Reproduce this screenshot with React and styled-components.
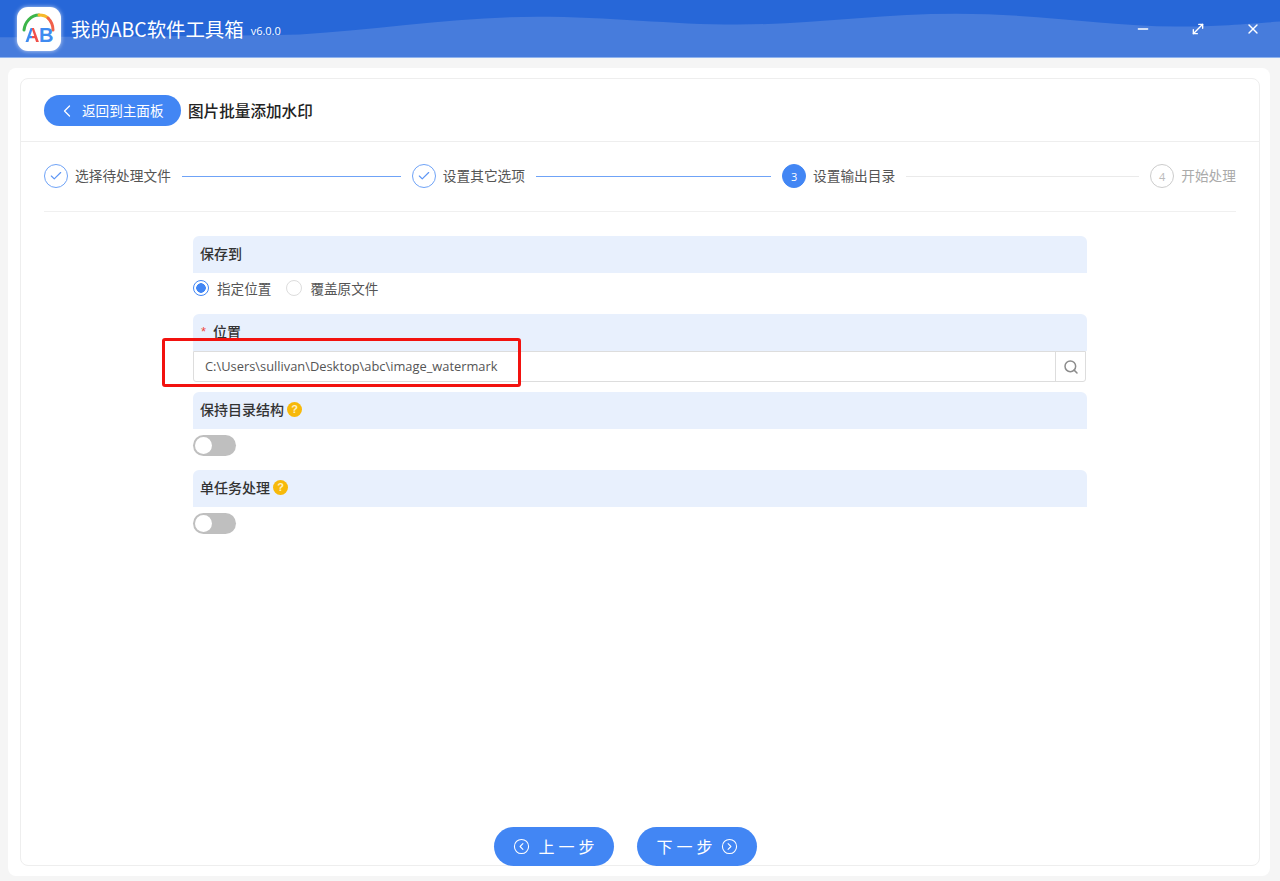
import { Fragment } from "react";
import styled, { createGlobalStyle } from "styled-components";
import { Check, ChevronLeft, CircleChevronLeft, CircleChevronRight, Minus, MoveDiagonal, Search, X } from "lucide-react";

const GlobalStyle = createGlobalStyle`
  html, body {
    margin: 0;
    padding: 0;
    background: #f5f5f5;
  }
  body {
    font-family: "Noto Sans CJK SC", "Open Sans", sans-serif;
    color: #333;
  }
  * {
    box-sizing: border-box;
  }
`;

const Page = styled.div`
  display: flex;
  flex-direction: column;
  width: 1280px;
  height: 881px;
  overflow: hidden;
  background: #f5f5f5;
`;

const Header = styled.header`
  position: relative;
  display: flex;
  align-items: center;
  flex: none;
  height: 58px;
  padding: 0 19px 0 17px;
  background: #2767d8;
  border-bottom: 1px solid #8fb3ee;
  color: #fff;
`;

const Wave = styled.svg`
  position: absolute;
  inset: 0;
  width: 100%;
  height: 100%;
`;

const Logo = styled.div`
  position: relative;
  display: flex;
  align-items: center;
  justify-content: center;
  flex: none;
  width: 44px;
  height: 44px;
  margin-top: 1px;
  border-radius: 11px;
  background: #fff;
  box-shadow: 0 0 4px rgba(255, 255, 255, 0.7);
`;

const LogoArc = styled.svg`
  position: absolute;
  left: 4px;
  top: 5px;
  width: 35px;
  height: 20px;
`;

const LogoText = styled.span`
  position: relative;
  margin-top: 12px;
  font: 700 20px/1 "Liberation Sans", sans-serif;
  letter-spacing: -0.5px;
  color: #3f8bf0;
`;

const LogoA = styled.span`
  background: linear-gradient(90deg, #3f8bf0 48%, #f0504a 48%);
  -webkit-background-clip: text;
  background-clip: text;
  color: transparent;
`;

const AppName = styled.h1`
  position: relative;
  margin: 0 0 0 10px;
  font-size: 19.4px;
  font-weight: 400;
  white-space: nowrap;
`;

const Version = styled.span`
  position: relative;
  margin: 3px 0 0 7px;
  font: 11px "Open Sans", sans-serif;
`;

const WindowButtons = styled.div`
  position: relative;
  display: flex;
  gap: 39px;
  margin: 1px 0 0 auto;
`;

const Content = styled.main`
  display: flex;
  flex: 1;
  padding: 10px 10px 5px 8px;
  min-height: 0;
`;

const Panel = styled.div`
  display: flex;
  flex: 1;
  padding: 10px 10px 10px 12px;
  background: #fff;
  border-radius: 8px;
`;

const Card = styled.div`
  display: flex;
  flex: 1;
  flex-direction: column;
  border: 1px solid #eee;
  border-radius: 8px;
`;

const TopBar = styled.div`
  display: flex;
  align-items: center;
  flex: none;
  gap: 7px;
  height: 63px;
  padding: 1px 23px 0;
  border-bottom: 1px solid #eee;
`;

const BackButton = styled.button`
  display: flex;
  align-items: center;
  gap: 5px;
  width: 137px;
  height: 31px;
  padding: 0 0 2px 13px;
  border: 0;
  border-radius: 16px;
  background: #4286f4;
  color: #fff;
  font: 13.6px "Noto Sans CJK SC", sans-serif;
  svg {
    margin-top: 2px;
  }
`;

const PageTitle = styled.h2`
  margin: 0 0 2px;
  font-size: 15.6px;
  font-weight: 500;
  color: #222;
`;

const Steps = styled.div`
  display: flex;
  align-items: center;
  flex: none;
  height: 70px;
  margin: 0 23px;
  border-bottom: 1px solid #f0f0f0;
`;

const Step = styled.div`
  display: flex;
  align-items: center;
  flex: none;
  gap: 7px;
  font-size: 13.7px;
  color: ${(p) => (p.$state === "todo" ? "#aaa" : "#555")};
`;

const StepLabel = styled.span`
  margin-bottom: 4px;
`;

const StepDot = styled.span`
  display: flex;
  align-items: center;
  justify-content: center;
  flex: none;
  width: 24px;
  height: 24px;
  margin-bottom: 1px;
  padding-top: ${(p) => (p.$state === "done" ? 0 : 1)}px;
  border-radius: 50%;
  font: 11px "Open Sans", sans-serif;
  border: 1.5px solid ${(p) => (p.$state === "done" ? "#6fa3f7" : p.$state === "todo" ? "#ccc" : "#4286f4")};
  background: ${(p) => (p.$state === "active" ? "#4286f4" : "#fff")};
  color: ${(p) => (p.$state === "done" ? "#5d96f5" : p.$state === "todo" ? "#bbb" : "#fff")};
`;

const StepLine = styled.div`
  flex: ${(p) => p.$grow} 1 0;
  height: 1px;
  margin: 0 11px;
  background: ${(p) => (p.$done ? "#6fa3f7" : "#eaeaea")};
`;

const Form = styled.div`
  display: flex;
  flex: 1;
  flex-direction: column;
  width: 894px;
  margin: 24px 0 0 172px;
`;

const SectionHead = styled.div`
  display: flex;
  align-items: center;
  gap: 3px;
  flex: none;
  height: 37px;
  padding: 0 7px 3px;
  border-radius: 6px 6px 0 0;
  background: #e8f0fd;
  font-size: 14px;
  font-weight: 500;
  color: #333;
  margin-top: ${(p) => p.$gap || 0}px;
`;

const Required = styled.span`
  color: #f04a3e;
  font: 13px "Liberation Sans", sans-serif;
  margin: 0 4px 0 1px;
`;

const Help = styled.span`
  display: flex;
  align-items: center;
  justify-content: center;
  width: 15px;
  height: 15px;
  border-radius: 50%;
  background: #f7b90a;
  color: #fff0c4;
  font: 700 11px "Liberation Sans", sans-serif;
`;

const RadioRow = styled.div`
  display: flex;
  align-items: center;
  flex: none;
  height: 31px;
  margin-bottom: 10px;
  padding-bottom: 2px;
  font-size: 13.6px;
  color: #555;
`;

const RadioDot = styled.span`
  flex: none;
  width: 16px;
  height: 16px;
  margin-right: 8px;
  border-radius: 50%;
  border: 1px solid ${(p) => (p.$on ? "#4286f4" : "#ddd")};
  background: ${(p) => (p.$on ? "radial-gradient(circle, #4286f4 0 4.5px, #fff 5px)" : "#fff")};
`;

const RadioLabel = styled.span`
  margin-right: 15px;
`;

const PathField = styled.div`
  position: relative;
  display: flex;
  flex: none;
  height: 31px;
  margin-right: 1px;
  border: 1px solid #ddd;
  border-radius: 0 0 3px 3px;
`;

const PathInput = styled.input`
  flex: 1;
  min-width: 0;
  padding: 0 11px 2px;
  border: 0;
  outline: 0;
  background: transparent;
  color: #555;
  font: 12.86px "Open Sans", sans-serif;
`;

const SearchButton = styled.span`
  display: flex;
  align-items: center;
  justify-content: center;
  width: 30px;
  border-left: 1px solid #ddd;
  color: #8c8c8c;
`;

const Callout = styled.div`
  position: absolute;
  left: -32px;
  top: -14px;
  width: 359px;
  height: 49px;
  border: 3px solid #f2120f;
  border-radius: 3px;
  pointer-events: none;
`;

const Toggle = styled.div`
  flex: none;
  width: 43px;
  height: 21px;
  margin: 6px 0 0;
  padding: 2px;
  border-radius: 11px;
  background: #bfbfbf;
  &::before {
    content: "";
    display: block;
    width: 17px;
    height: 17px;
    border-radius: 50%;
    background: #fff;
  }
`;

const Footer = styled.div`
  display: flex;
  justify-content: center;
  flex: none;
  gap: 23.5px;
  margin-bottom: -1px;
  padding-right: 29px;
`;

const StepButton = styled.button`
  display: flex;
  align-items: center;
  justify-content: center;
  gap: 8px;
  width: 119.5px;
  height: 39px;
  padding: 0;
  border: 0;
  border-radius: 20px;
  background: #4286f4;
  color: #fff;
  font: 16px "Noto Sans CJK SC", sans-serif;
`;

const StepButtonLabel = styled.span`
  margin: 0 -4px 2px 0;
  letter-spacing: 4px;
`;

const steps = [
  { label: "选择待处理文件", state: "done", grow: 218 },
  { label: "设置其它选项", state: "done", grow: 234 },
  { label: "设置输出目录", state: "active", num: 3, grow: 232 },
  { label: "开始处理", state: "todo", num: 4 },
];

function App() {
  return (
    <>
      <GlobalStyle />
      <Page>
        <Header>
          <Wave viewBox="0 0 1280 58" preserveAspectRatio="none">
            <path d="M0 38 C100 37 220 37 300 35 C380 30 460 17 537 17 C610 17 670 25 737 25 C810 25 880 14 956 14 C1040 14 1110 27 1175 27 C1220 27 1250 24 1280 22 L1280 58 L0 58 Z" fill="#477cdc" />
          </Wave>
          <Logo>
            <LogoArc viewBox="0 0 35 20" fill="none" strokeWidth="3" strokeLinecap="round">
              <path d="M3 18 C4 10 10 3 18 3" stroke="#3cb54a" />
              <path d="M18 3 C22 3 25 4 27 6" stroke="#f6b92b" />
              <path d="M27 6 C30 9 32 13 32 18" stroke="#f0604a" />
            </LogoArc>
            <LogoText><LogoA>A</LogoA>B</LogoText>
          </Logo>
          <AppName>我的ABC软件工具箱</AppName>
          <Version>v6.0.0</Version>
          <WindowButtons>
            <Minus size={16} />
            <MoveDiagonal size={16} />
            <X size={16} />
          </WindowButtons>
        </Header>
        <Content>
          <Panel>
            <Card>
              <TopBar>
                <BackButton>
                  <ChevronLeft size={20} strokeWidth={1.5} />
                  返回到主面板
                </BackButton>
                <PageTitle>图片批量添加水印</PageTitle>
              </TopBar>
              <Steps>
                {steps.map((s, i) => (
                  <Fragment key={s.label}>
                    <Step $state={s.state}>
                      <StepDot $state={s.state}>
                        {s.state === "done" ? <Check size={14} /> : s.num}
                      </StepDot>
                      <StepLabel>{s.label}</StepLabel>
                    </Step>
                    {i < steps.length - 1 && <StepLine $grow={s.grow} $done={s.state === "done"} />}
                  </Fragment>
                ))}
              </Steps>
              <Form>
                <SectionHead>保存到</SectionHead>
                <RadioRow>
                  <RadioDot $on />
                  <RadioLabel>指定位置</RadioLabel>
                  <RadioDot />
                  <RadioLabel>覆盖原文件</RadioLabel>
                </RadioRow>
                <SectionHead>
                  <Required>*</Required>位置
                </SectionHead>
                <PathField>
                  <PathInput readOnly value="C:\Users\sullivan\Desktop\abc\image_watermark" />
                  <SearchButton>
                    <Search size={16} strokeWidth={2.25} />
                  </SearchButton>
                  <Callout />
                </PathField>
                <SectionHead $gap={10}>
                  保持目录结构<Help>?</Help>
                </SectionHead>
                <Toggle />
                <SectionHead $gap={14}>
                  单任务处理<Help>?</Help>
                </SectionHead>
                <Toggle />
              </Form>
              <Footer>
                <StepButton>
                  <CircleChevronLeft size={17} strokeWidth={1.5} />
                  <StepButtonLabel>上一步</StepButtonLabel>
                </StepButton>
                <StepButton>
                  <StepButtonLabel>下一步</StepButtonLabel>
                  <CircleChevronRight size={17} strokeWidth={1.5} />
                </StepButton>
              </Footer>
            </Card>
          </Panel>
        </Content>
      </Page>
    </>
  );
}

export default App;
